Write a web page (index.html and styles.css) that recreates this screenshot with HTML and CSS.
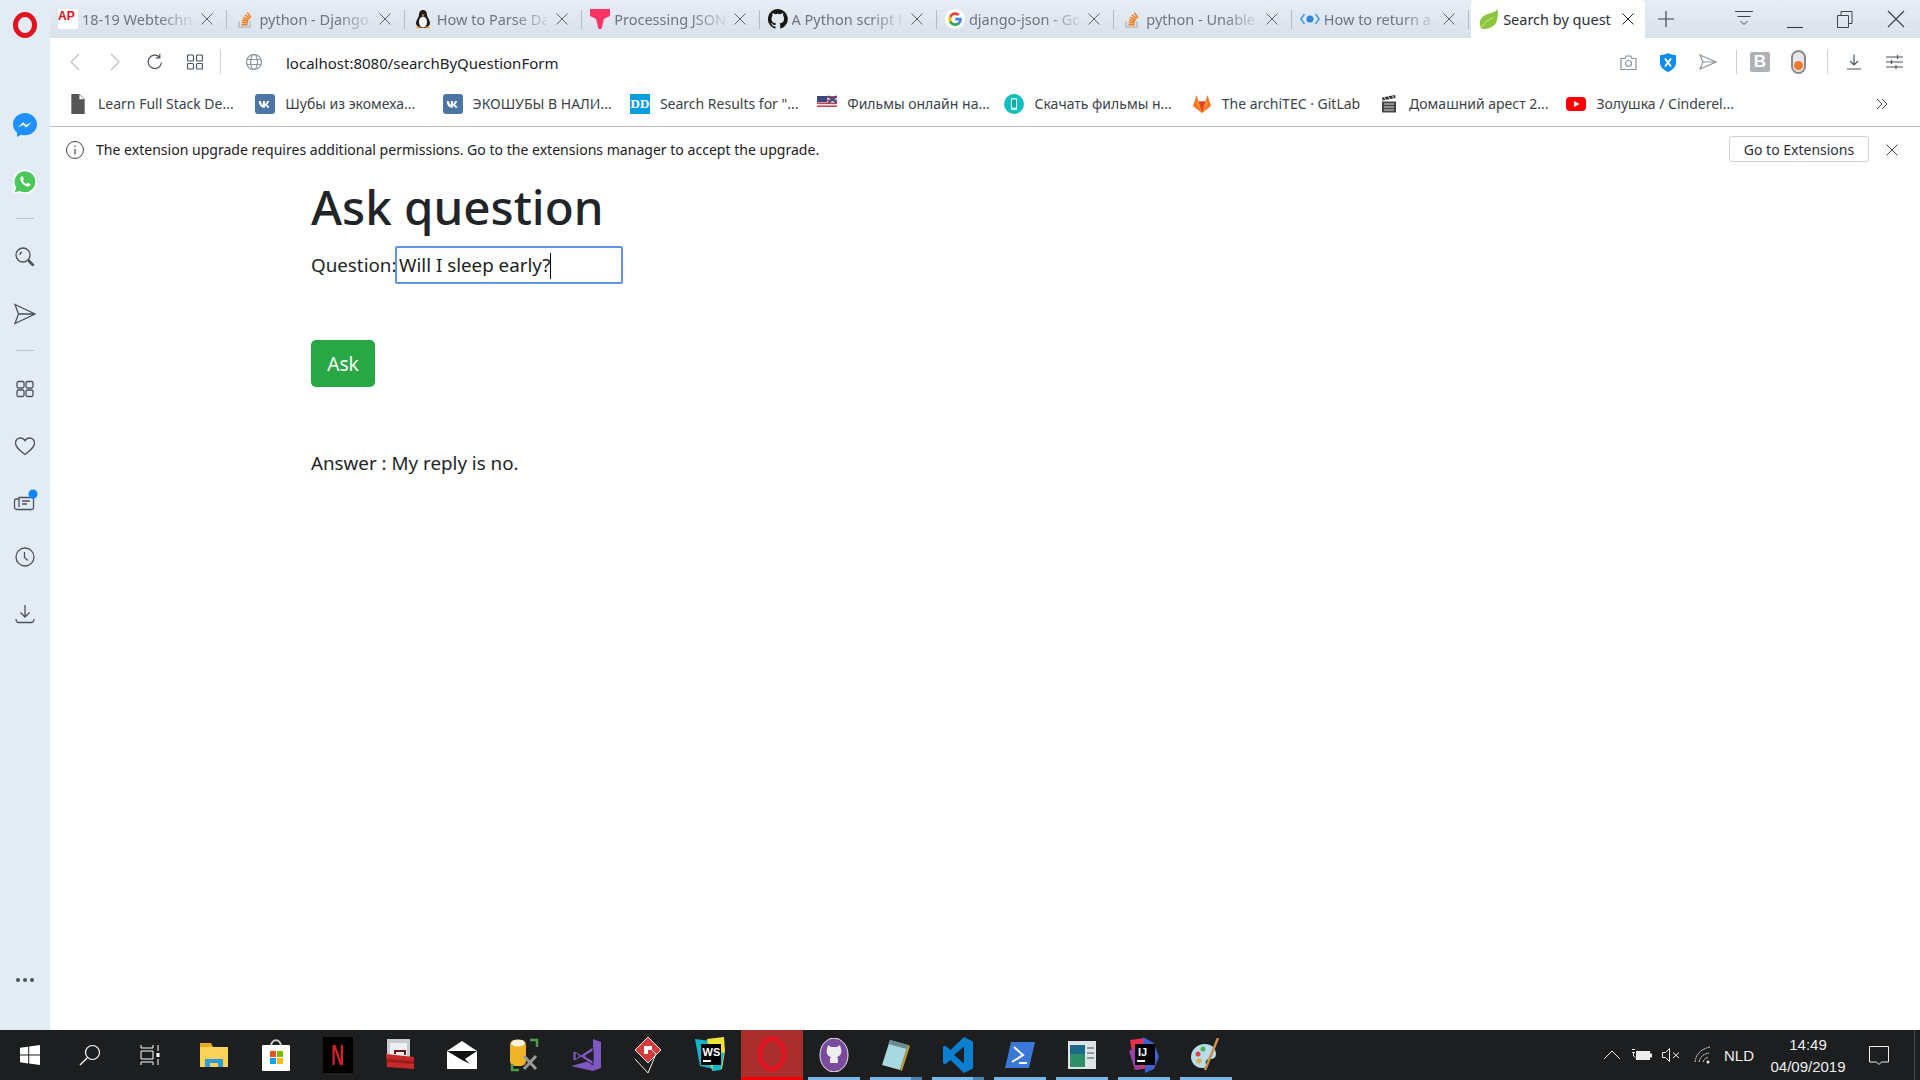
FILE: index.html
```html
<!DOCTYPE html>
<html lang="en">
<head>
    <meta charset="UTF-8">
    <meta name="viewport" content="width=device-width, initial-scale=1.0">
    <title>Search by question</title>
    <link rel="stylesheet" href="styles.css">
</head>
<body>
    <svg class="defs" width="0" height="0">
        <symbol id="so" viewBox="0 0 20 20">
            <path d="M4 12.5v5.5h11v-5.5" fill="none" stroke="#bcbbbb" stroke-width="1.6"/>
            <path d="M6.5 15.8h6.2M6.7 13.4l6.1.5M7.2 10.9l6 1.3M8.2 8.3l5.5 2.7M10 5.8l4.8 3.8M12.3 3.6l3.6 4.9" stroke="#f48024" stroke-width="1.6" fill="none"/>
        </symbol>
        <symbol id="x" viewBox="0 0 12 12">
            <path d="M0.5 0.5l11 11M11.5 0.5l-11 11" stroke="currentColor" stroke-width="1" fill="none"/>
        </symbol>
        <symbol id="vk" viewBox="0 0 20 20">
            <rect width="20" height="20" rx="3" fill="#4c75a3"/>
            <path d="M3.5 7h2.2c.5 2 1.3 3.5 2.2 3.9V7h2v2.9c.9-.2 1.8-1.4 2.2-2.9h2c-.3 1.700-1.400 3-2.300 3.600.9.500 2.100 1.500 2.700 3.200h-2.200c-.5-1.300-1.400-2.200-2.400-2.300v2.300h-.4c-3.500 0-5.500-2.400-5.800-6.800z" fill="#fff"/>
        </symbol>
    </svg>

    <div class="screen">
        <aside class="sidebar">
            <div class="side-logo">
                <svg width="24" height="26" viewBox="0 0 24 26"><ellipse cx="12" cy="13" rx="9.500" ry="10.500" fill="none" stroke="#e0141f" stroke-width="5"/></svg>
            </div>
            <div class="side-item">
                <svg width="26" height="26" viewBox="0 0 26 26"><path d="M13 1C6.400 1 1 6 1 12.200c0 3.400 1.500 6.400 4.100 8.400V25l4-2.300c1.200.4 2.500.6 3.900.6 6.600 0 12-5 12-11.100S19.600 1 13 1z" fill="#1e90ff"/><path d="M6 15.500l5.200-5.300 2.800 2.800 5.500-2.800-5.200 5.400-2.900-2.800z" fill="#fff"/></svg>
            </div>
            <div class="side-item">
                <svg width="26" height="26" viewBox="0 0 26 26"><path d="M13 1.500C6.700 1.500 1.800 6.500 1.800 12.700c0 2.100.6 4.100 1.600 5.800L1.500 24.500l6.100-1.800c1.600.9 3.400 1.300 5.400 1.300 6.200 0 11.200-5 11.200-11.300S19.200 1.500 13 1.500z" fill="#4cc75c" stroke="#fff" stroke-width="1.500"/><path d="M9.500 7.500c-.8.500-1.500 1.700-1 3.400.8 2.800 3.600 5.800 6.700 6.500 1.500.3 2.700-.4 3.100-1.300.2-.5.100-.9-.2-1.100l-2-1c-.3-.1-.6 0-.8.200l-.7.900c-1.700-.6-3-1.900-3.700-3.600l.8-.8c.2-.2.300-.5.100-.8l-.9-2.200c-.2-.5-.7-.6-1.400-.2z" fill="#fff"/></svg>
            </div>
            <div class="side-sep"></div>
            <div class="side-item">
                <svg class="line-icon" width="22" height="22" viewBox="0 0 22 22"><circle cx="9" cy="9" r="7"/><path d="M6 9a3.500 3.500 0 0 1 2-3.200M14 14l5.500 5.500" /><path d="M14.500 15.500l1-1 4 4-1 1z"/></svg>
            </div>
            <div class="side-item">
                <svg class="line-icon" width="24" height="22" viewBox="0 0 24 22"><path d="M2 1.500L22 11 2 20.500 5.500 11zM5.500 11H22"/></svg>
            </div>
            <div class="side-sep"></div>
            <div class="side-item">
                <svg class="line-icon" width="20" height="20" viewBox="0 0 20 20"><rect x="2" y="2.500" width="7" height="6.500" rx="1.500"/><rect x="11" y="2.500" width="7" height="6.500" rx="1.500"/><rect x="2" y="11" width="7" height="6.500" rx="1.500"/><rect x="11" y="11" width="7" height="6.500" rx="1.500"/></svg>
            </div>
            <div class="side-item">
                <svg class="line-icon" width="22" height="20" viewBox="0 0 22 20"><path d="M11 18.500C6 14.500 1.500 11.500 1.500 7A4.800 4.800 0 0 1 6.300 2C8.300 2 10 3 11 4.800 12 3 13.700 2 15.700 2A4.800 4.800 0 0 1 20.500 7c0 4.500-4.500 7.500-9.500 11.500z"/></svg>
            </div>
            <div class="side-item side-news">
                <svg class="line-icon" width="26" height="26" viewBox="0 0 26 26"><path d="M7 8.500h13a1.500 1.500 0 0 1 1.500 1.500v9a1.500 1.500 0 0 1-1.500 1.500H5A2.500 2.500 0 0 1 2.500 18v-6.500A2 2 0 0 1 4.500 10H7zM7 10v8"/><path d="M10 12h8M10 15h5"/><circle class="badge-dot" cx="21" cy="5" r="4.500"/></svg>
            </div>
            <div class="side-item side-clock">
                <svg class="line-icon" width="22" height="22" viewBox="0 0 22 22"><circle cx="11" cy="11" r="9"/><path d="M10.500 6v5.500l3.500 3"/></svg>
            </div>
            <div class="side-item">
                <svg class="line-icon" width="22" height="22" viewBox="0 0 22 22"><path d="M11 2v11.500M6.500 9.500l4.500 4.500 4.500-4.500M2 16c0 2 1 3.500 3 3.500h12c2 0 3-1.500 3-3.500"/></svg>
            </div>
            <div class="side-dots">
                <span></span><span></span><span></span>
            </div>
        </aside>

        <div class="browser">
            <div class="tabstrip">
                <div class="tab">
                    <svg class="favicon" viewBox="0 0 20 20"><rect width="20" height="20" fill="#fff"/><text x="0" y="11" class="fav-ap">AP</text></svg>
                    <span class="tab-title">18-19 Webtechn</span>
                    <svg class="tab-close"><use href="#x"/></svg>
                </div>
                <div class="tab">
                    <svg class="favicon"><use href="#so"/></svg>
                    <span class="tab-title">python - Django</span>
                    <svg class="tab-close"><use href="#x"/></svg>
                </div>
                <div class="tab">
                    <svg class="favicon" viewBox="0 0 20 20"><path d="M10 1c-3 0-4 2.500-4 5 0 2-3 5-3 8 0 3 3 5 7 5s7-2 7-5c0-3-3-6-3-8 0-2.500-1-5-4-5z" fill="#1d1d1d"/><ellipse cx="10" cy="13" rx="4" ry="5.500" fill="#f4f4f4"/><path d="M8.500 5.500h3l-1.500 2z" fill="#f0a020"/><path d="M3 19c1-2 3-2 4-1l-1 1.500zM17 19c-1-2-3-2-4-1l1 1.500z" fill="#f0a020"/></svg>
                    <span class="tab-title">How to Parse Da</span>
                    <svg class="tab-close"><use href="#x"/></svg>
                </div>
                <div class="tab">
                    <svg class="favicon" viewBox="0 0 20 20"><path d="M0 0h20v7l-6 3-2.500 10h-3L6 10 0 7z" fill="#ff3366"/></svg>
                    <span class="tab-title">Processing JSON</span>
                    <svg class="tab-close"><use href="#x"/></svg>
                </div>
                <div class="tab">
                    <svg class="favicon" viewBox="0 0 20 20"><path d="M10 0a10 10 0 0 0-3.200 19.500c.5.100.7-.2.700-.5v-1.700c-2.800.6-3.400-1.300-3.400-1.300-.4-1.200-1.100-1.500-1.100-1.500-.9-.6.100-.6.100-.6 1 .1 1.500 1 1.500 1 .9 1.500 2.300 1.100 2.900.8.100-.6.300-1.100.6-1.300-2.200-.3-4.600-1.100-4.600-4.900 0-1.100.4-2 1-2.700-.1-.2-.4-1.300.1-2.600 0 0 .8-.3 2.700 1a9.400 9.400 0 0 1 5 0c1.900-1.300 2.700-1 2.700-1 .5 1.300.2 2.400.1 2.600.6.700 1 1.600 1 2.700 0 3.800-2.300 4.600-4.600 4.900.4.300.7.900.7 1.900V19c0 .3.200.6.700.5A10 10 0 0 0 10 0z" fill="#161614"/></svg>
                    <span class="tab-title">A Python script f</span>
                    <svg class="tab-close"><use href="#x"/></svg>
                </div>
                <div class="tab">
                    <svg class="favicon" viewBox="0 0 20 20"><circle cx="10" cy="10" r="10" fill="#fff"/><path d="M16.800 10.200c0-.5 0-1-.1-1.400H10.200v2.700h3.700c-.2.900-.6 1.600-1.400 2.100v1.700h2.200c1.300-1.200 2.100-3 2.100-5.100z" fill="#4285f4"/><path d="M10.200 17c1.800 0 3.400-.6 4.500-1.700l-2.200-1.700c-.6.400-1.400.7-2.300.7-1.800 0-3.300-1.200-3.800-2.800H4.100v1.800A6.800 6.800 0 0 0 10.200 17z" fill="#34a853"/><path d="M6.400 11.500a4 4 0 0 1 0-2.700V7H4.100a6.800 6.800 0 0 0 0 6.300z" fill="#fbbc05"/><path d="M10.200 6c1 0 1.900.4 2.600 1l2-2a6.800 6.800 0 0 0-10.700 2l2.300 1.800C6.900 7.200 8.400 6 10.200 6z" fill="#ea4335"/></svg>
                    <span class="tab-title">django-json - Go</span>
                    <svg class="tab-close"><use href="#x"/></svg>
                </div>
                <div class="tab">
                    <svg class="favicon"><use href="#so"/></svg>
                    <span class="tab-title">python - Unable</span>
                    <svg class="tab-close"><use href="#x"/></svg>
                </div>
                <div class="tab">
                    <svg class="favicon" viewBox="0 0 20 20"><path d="M4.500 5L1 10l3.500 5M15.500 5L19 10l-3.500 5" fill="none" stroke="#4aa8e8" stroke-width="1.800"/><circle cx="10" cy="10" r="3.500" fill="#2b88d8"/></svg>
                    <span class="tab-title">How to return a</span>
                    <svg class="tab-close"><use href="#x"/></svg>
                </div>
                <div class="tab tab-active">
                    <svg class="favicon" viewBox="0 0 20 20"><path d="M18.500 0C17 3 13 3.500 9 5 3 7 0 11 1 16c.3 1.500 1 3 2 4 5 0 11-1 14-6 1.500-3 2.500-9 1.500-14z" fill="#8cc63f"/><path d="M3 18c3-5 7-8 11-9" stroke="#d8e87a" fill="none"/></svg>
                    <span class="tab-title">Search by quest</span>
                    <svg class="tab-close"><use href="#x"/></svg>
                </div>
                <div class="new-tab">
                    <svg width="16" height="16" viewBox="0 0 16 16"><path d="M8 0v16M0 8h16" stroke="#3d4650" stroke-width="1.200"/></svg>
                </div>
                <div class="win-buttons">
                    <svg width="20" height="20" viewBox="0 0 20 20"><path d="M1 2.500h18M3.500 7.500h13M6.500 12l3.500 3.500 3.500-3.500" stroke="#3d4650" fill="none"/></svg>
                    <svg width="20" height="20" viewBox="0 0 20 20"><path d="M2 18.500h16" stroke="#3d4650" stroke-width="1.200"/></svg>
                    <svg width="20" height="20" viewBox="0 0 20 20"><path d="M2.500 6.500h11v12h-11zM6 6.500V2.500h11v12h-3.500" stroke="#3d4650" fill="none"/></svg>
                    <svg width="20" height="20" viewBox="0 0 20 20"><path d="M2 2l16 16M18 2L2 18" stroke="#3d4650" stroke-width="1.200"/></svg>
                </div>
            </div>

            <div class="toolbar">
                <div class="tool-cell tool-first"><svg class="tool-icon tool-dim" width="12" height="18" viewBox="0 0 12 18"><path d="M10 1L2 9l8 8"/></svg></div>
                <div class="tool-cell"><svg class="tool-icon tool-dim" width="12" height="18" viewBox="0 0 12 18"><path d="M2 1l8 8-8 8"/></svg></div>
                <div class="tool-cell"><svg class="tool-icon" width="18" height="18" viewBox="0 0 18 18"><path d="M15.500 9.500A6.700 6.700 0 1 1 13.500 4M13.800 0.800v4h-4"/></svg></div>
                <div class="tool-cell"><svg class="tool-icon" width="16" height="16" viewBox="0 0 16 16"><rect x="0.500" y="1" width="6" height="6" rx="1"/><rect x="9.500" y="1" width="6" height="6" rx="1"/><rect x="0.500" y="9.500" width="6" height="5.500" rx="1"/><rect x="9.500" y="9.500" width="6" height="5.500" rx="1"/></svg></div>
                <div class="tool-sep"></div>
                <div class="tool-cell tool-globe"><svg class="tool-icon tool-grey" width="16" height="16" viewBox="0 0 16 16"><circle cx="8" cy="8" r="7.500"/><ellipse cx="8" cy="8" rx="3.500" ry="7.500"/><path d="M1 5.500h14M1 10.500h14"/></svg></div>
                <span class="url">localhost:8080/searchByQuestionForm</span>

                <div class="tool-cell tool-right"><svg class="tool-icon tool-grey" width="17" height="15" viewBox="0 0 17 15"><path d="M1 3.500h4l1-2.500h5l1 2.500h4v11H1z"/><circle cx="8.500" cy="8.500" r="3"/></svg></div>
                <div class="tool-cell"><svg width="16" height="19" viewBox="0 0 16 19"><path d="M8 0c2.500 1.500 5 2 8 2v8c0 4-3.500 7-8 9-4.500-2-8-5-8-9V2c3 0 5.500-.5 8-2z" fill="#0d8cf2"/><path d="M5 5.500l6 8M11 5.500l-6 8" stroke="#fff" stroke-width="2"/></svg></div>
                <div class="tool-cell"><svg class="tool-icon tool-grey" width="18" height="16" viewBox="0 0 18 16"><path d="M1 1l16 7-16 7 3-7zM4 8h13"/></svg></div>
                <div class="tool-sep tool-sep-right"></div>
                <div class="tool-cell"><div class="ext-b">B</div></div>
                <div class="tool-cell tool-toggle"><div class="ext-toggle"><span></span></div></div>
                <div class="tool-sep tool-sep-last"></div>
                <div class="tool-cell"><svg class="tool-icon" width="16" height="16" viewBox="0 0 16 16"><path d="M8 0.500v10M4 7l4 4 4-4M1 15h14"/></svg></div>
                <div class="tool-cell"><svg class="tool-icon" width="17" height="16" viewBox="0 0 17 16"><path d="M0 3h17M0 8h17M0 13h17M11.500 1v4M5.500 6v4M10 11v4"/></svg></div>
            </div>

            <div class="bookmarks">
                <div class="bookmark">
                    <svg class="bm-icon" viewBox="0 0 18 18"><path d="M3 0h7l5 5v13H3z" fill="#555"/><path d="M10 0v5h5z" fill="#fff" stroke="#555" stroke-width=".5"/></svg>
                    <span>Learn Full Stack De...</span>
                </div>
                <div class="bookmark">
                    <svg class="bm-icon"><use href="#vk"/></svg>
                    <span>Шубы из экомеха...</span>
                </div>
                <div class="bookmark">
                    <svg class="bm-icon"><use href="#vk"/></svg>
                    <span>ЭКОШУБЫ В НАЛИ...</span>
                </div>
                <div class="bookmark">
                    <div class="bm-dd">DD</div>
                    <span>Search Results for "...</span>
                </div>
                <div class="bookmark">
                    <svg class="bm-icon" viewBox="0 0 20 20"><rect y="2" width="20" height="11" fill="#c8434e"/><rect y="4" width="20" height="1.500" fill="#f0e8e8"/><rect y="7" width="20" height="1.500" fill="#f0e8e8"/><rect y="10" width="20" height="1.500" fill="#f0e8e8"/><rect y="2" width="10" height="6" fill="#3a4a80"/><path d="M11 2l9 7M20 2l-9 7" stroke="#34508a" stroke-width="2"/></svg>
                    <span>Фильмы онлайн на...</span>
                </div>
                <div class="bookmark">
                    <svg class="bm-icon" viewBox="0 0 20 20"><circle cx="10" cy="10" r="10" fill="#10c0c0"/><rect x="7" y="4" width="6" height="12" rx="1" fill="#d8f6f6"/><rect x="8" y="5.500" width="4" height="8" fill="#10a8a8"/></svg>
                    <span>Скачать фильмы н...</span>
                </div>
                <div class="bookmark">
                    <svg class="bm-icon" viewBox="0 0 20 20"><path d="M10 19L1 12l1.500-4.500L4.500 1l2 6.500h7l2-6.500 2 6.500L19 12z" fill="#fc6d26"/><path d="M10 19L6.500 7.500h7z" fill="#e24329"/><path d="M10 19L2.500 7.500H6.500zM10 19l7.500-11.500H13.500z" fill="#fca326" opacity=".7"/></svg>
                    <span>The archiTEC · GitLab</span>
                </div>
                <div class="bookmark">
                    <svg class="bm-icon" viewBox="0 0 20 20"><path d="M3 7.500h14v11H3z" fill="#444"/><path d="M3 3.500l13-2.500.6 3-13 2.500z" fill="#333"/><path d="M5 3l2 3M9 2.200l2 3M13 1.500l2 3M5 10h10M5 13h10M5 16h10" stroke="#ddd"/></svg>
                    <span>Домашний арест 2...</span>
                </div>
                <div class="bookmark">
                    <svg class="bm-icon" viewBox="0 0 20 20"><rect y="3" width="20" height="14" rx="4" fill="#f00"/><path d="M8 7l5.500 3L8 13z" fill="#fff"/></svg>
                    <span>Золушка / Cinderel...</span>
                </div>
                <svg class="bm-more" width="12" height="12" viewBox="0 0 12 12"><path d="M1 1l5 5-5 5M6 1l5 5-5 5" stroke="#444" fill="none"/></svg>
            </div>

            <div class="infobar">
                <svg class="info-icon" width="18" height="18" viewBox="0 0 18 18"><circle cx="9" cy="9" r="8.500" fill="none" stroke="#444"/><path d="M9 8v5.500M9 4.500v1.500" stroke="#444" stroke-width="1.200"/></svg>
                <span class="info-text">The extension upgrade requires additional permissions. Go to the extensions manager to accept the upgrade.</span>
                <button class="info-btn">Go to Extensions</button>
                <svg class="info-close"><use href="#x"/></svg>
            </div>

            <main class="page">
                <h1>Ask question</h1>
                <div class="form-row">
                    <label class="form-label">Question:</label>
                    <div class="field">Will I sleep early?<span class="caret"></span></div>
                </div>
                <button class="btn-ask">Ask</button>
                <p class="answer">Answer : My reply is no.</p>
            </main>
        </div>

        <footer class="taskbar">
            <div class="task-sys">
                <svg width="20" height="20" viewBox="0 0 20 20"><path d="M0 2.800l8.200-1.100v7.900H0zM9.200 1.500L20 0v9.600H9.200zM0 10.500h8.200v7.900L0 17.200zM9.200 10.500H20V20L9.200 18.500z" fill="#fff"/></svg>
            </div>
            <div class="task-sys">
                <svg width="22" height="22" viewBox="0 0 22 22"><circle cx="13.500" cy="8.500" r="7" fill="none" stroke="#fff" stroke-width="1.200"/><path d="M8.500 13.500L1 21" stroke="#fff" stroke-width="1.200"/></svg>
            </div>
            <div class="task-sys task-sys-last">
                <svg width="20" height="22" viewBox="0 0 20 22"><path d="M1 1v3h12V1M1 21v-3h12v3M1 7h12v8H1zM18 1v6M18 15v6" fill="none" stroke="#fff"/><rect x="16.500" y="9" width="3" height="4" fill="#fff"/></svg>
            </div>
            <div class="task-cell">
                <svg width="28" height="26" viewBox="0 0 28 26"><path d="M0 1h11l2 4h15v20H0z" fill="#e8a820"/><rect y="5" width="28" height="20" fill="#fbd25a"/><path d="M5 25v-8h18v8h-5v-4h-8v4z" fill="#2d9cdb"/></svg>
            </div>
            <div class="task-cell">
                <svg width="28" height="32" viewBox="0 0 28 32"><path d="M9 8c0-9 10-9 10 0" stroke="#ccc" stroke-width="2" fill="none"/><rect y="6" width="28" height="26" rx="1" fill="#fff"/><rect x="8" y="12" width="6" height="6" fill="#f25022"/><rect x="15" y="12" width="6" height="6" fill="#7fba00"/><rect x="8" y="19" width="6" height="6" fill="#00a4ef"/><rect x="15" y="19" width="6" height="6" fill="#ffb900"/></svg>
            </div>
            <div class="task-cell">
                <div class="app-netflix"><span>N</span></div>
            </div>
            <div class="task-cell">
                <svg width="28" height="32" viewBox="0 0 28 32"><rect x="1" y="0" width="23" height="20" fill="#c8ccd0"/><rect x="4" y="4" width="17" height="14" fill="#eef0f2"/><path d="M0 15l28 3v12l-27-2z" fill="#c82a2a"/><path d="M0 20l28 2v3l-28-2z" fill="#962020"/><path d="M9 15v-3h10v4" stroke="#701818" stroke-width="2" fill="none"/></svg>
            </div>
            <div class="task-cell">
                <svg width="30" height="28" viewBox="0 0 30 28"><path d="M0 10L15 0l15 10v18H0z" fill="#fff"/><path d="M0 10h30L18 18l5 5-8-4z" fill="#111"/></svg>
            </div>
            <div class="task-cell">
                <svg width="30" height="34" viewBox="0 0 30 34"><rect x="1" y="2" width="16" height="26" rx="5" fill="#f0b429"/><ellipse cx="9" cy="5" rx="7" ry="3.500" fill="#f8f0d8"/><path d="M21 2h7v7M3 26v6h7" stroke="#4e9a4e" stroke-width="2.500" fill="none"/><path d="M15 31l12-13M27 31L15 18" stroke="#999" stroke-width="3"/></svg>
            </div>
            <div class="task-cell">
                <svg width="30" height="32" viewBox="0 0 30 32"><path d="M22 0l8 3v26l-8 3L0 27l22-6V0z" fill="#7e57c2"/><path d="M22 8L10 16l-6-4-2 1v8l2 1 6-4 12 8zM5 14.500l3 2.500-3 2.500zM22 12v10l-8-5z" fill="#7e57c2" stroke="#1c1e1f" stroke-width=".8"/></svg>
            </div>
            <div class="task-cell">
                <svg width="26" height="36" viewBox="0 0 26 36"><path d="M13 0l13 13-13 13L0 13z" fill="#d63b3b" stroke="#eee"/><path d="M13 9l8 8-8 19L0 22" fill="none" stroke="#eee"/><path d="M9 9h8v4h-4v4H9z" fill="#fff"/></svg>
            </div>
            <div class="task-cell">
                <svg width="30" height="36" viewBox="0 0 30 36"><path d="M0 2l16 2 3 28-14-3z" fill="#12b5cb"/><path d="M12 2l17-2 1 14-3 18-10 2z" fill="#f2e33a"/><path d="M20 14l9 2-3 17-9 1z" fill="#12b5cb"/><rect x="6" y="7" width="20" height="21" fill="#000"/><text x="7.500" y="19" class="app-text">WS</text><rect x="8" y="23" width="8" height="2" fill="#fff"/></svg>
            </div>
            <div class="task-cell task-active">
                <svg width="30" height="36" viewBox="0 0 30 36"><ellipse cx="15" cy="18" rx="12" ry="15" fill="none" stroke="#e01520" stroke-width="5"/></svg>
            </div>
            <div class="task-cell task-run">
                <svg width="30" height="34" viewBox="0 0 30 34"><ellipse cx="15" cy="17" rx="14" ry="17" fill="#7a4a9c" stroke="#eee"/><path d="M8 11l1-4 3 2h6l3-2 1 4c1 3 0 7-4 8 1 1 1 2 1 6h-8c0-4 0-5 1-6-4-1-5-5-4-8z" fill="#eee"/></svg>
            </div>
            <div class="task-cell task-run task-group">
                <svg width="28" height="32" viewBox="0 0 28 32"><path d="M8 1l18 5-8 25-18-5z" fill="#a8d8e0"/><path d="M8 1l18 5-1.500 4L6.500 5z" fill="#6a8a90"/><path d="M26 6l2 1-8 25-2-1z" fill="#c09a3a"/></svg>
            </div>
            <div class="task-cell task-run task-group">
                <svg width="30" height="36" viewBox="0 0 30 36"><path d="M21 0l9 4.500v27L21 36 7.500 23 2 27.500 0 26V10l2-1.500L7.500 13zM21 9.500L11 18l10 8.500z" fill="#0a7fd0"/></svg>
            </div>
            <div class="task-cell task-run">
                <svg width="30" height="26" viewBox="0 0 30 26"><path d="M6 0h24l-6 26H0z" fill="#3a78d8"/><path d="M9 5l9 8-11 7" stroke="#fff" stroke-width="2" fill="none"/><path d="M14 21h8" stroke="#fff" stroke-width="2"/></svg>
            </div>
            <div class="task-cell task-run">
                <svg width="28" height="28" viewBox="0 0 28 28"><rect width="28" height="28" fill="#dfe3e6"/><rect x="2" y="4" width="15" height="22" fill="#2f8f6a"/><rect x="2" y="4" width="15" height="9" fill="#1e6a8a"/><path d="M19 7h7M19 12h7M19 17h7" stroke="#8a9aa0" stroke-width="2"/></svg>
            </div>
            <div class="task-cell task-run">
                <svg width="30" height="36" viewBox="0 0 30 36"><path d="M1 3l15-2 4 30-14 2z" fill="#e8304f"/><path d="M14 0l11 6 5 14-5 12-9 4z" fill="#3d5fd0"/><path d="M0 14l8-4 4 22-6 1z" fill="#9b3fa8"/><rect x="6" y="7" width="20" height="21" fill="#000"/><text x="9" y="19" class="app-text">IJ</text><rect x="8" y="23" width="8" height="2" fill="#fff"/></svg>
            </div>
            <div class="task-cell task-run">
                <svg width="30" height="34" viewBox="0 0 30 34"><path d="M14 6C6 6 0 12 0 19c0 6 5 11 11 11 4 0 5-2 4-4-1-3 1-5 4-5 4 0 6-2 6-5 0-6-5-10-11-10z" fill="#b8dcec"/><circle cx="7" cy="16" r="2.500" fill="#e04040"/><circle cx="12" cy="11" r="2.500" fill="#50b050"/><circle cx="8" cy="23" r="2.500" fill="#e8b030"/><path d="M27 0l-13 32" stroke="#c8924a" stroke-width="2.500"/></svg>
            </div>

            <div class="tray">
                <div class="tray-item tray-chevron">
                    <svg width="18" height="10" viewBox="0 0 18 10"><path d="M1 9l8-8 8 8" stroke="#eee" fill="none"/></svg>
                </div>
                <div class="tray-item tray-battery">
                    <svg width="20" height="14" viewBox="0 0 20 14"><path d="M0 1.500h3M0 4.500h3" stroke="#eee"/><path d="M1.500 5v3l2 1.500" stroke="#eee" fill="none"/><rect x="4" y="3" width="14" height="9" fill="#eee"/><rect x="18" y="5.500" width="2" height="4" fill="#eee"/></svg>
                </div>
                <div class="tray-item tray-speaker">
                    <svg width="18" height="14" viewBox="0 0 18 14"><path d="M0.500 4.500h3l4-4v13l-4-4h-3z" fill="none" stroke="#eee"/><path d="M11 4.500l6 5.500M17 4.500L11 10" stroke="#eee"/></svg>
                </div>
                <div class="tray-item tray-wifi">
                    <svg width="18" height="18" viewBox="0 0 18 18"><path d="M1 16C2 8 7 3 16 1M5 16c1-5 4-8 10-9M9 16c.5-2 2-4 5-4.500" stroke="#ccc" fill="none" stroke-dasharray="2 .6"/><circle cx="14" cy="16" r="1.500" fill="#eee"/></svg>
                </div>
                <div class="tray-item tray-lang">NLD</div>
                <div class="tray-item tray-clock">
                    <span>14:49</span>
                    <span>04/09/2019</span>
                </div>
                <div class="tray-item tray-notify">
                    <svg width="20" height="20" viewBox="0 0 20 20"><path d="M0.500 1.500h19v15.500h-7l-2.500 2.500-2.500-2.500h-7z" fill="none" stroke="#eee"/></svg>
                </div>
                <div class="tray-line"></div>
            </div>
        </footer>
    </div>
</body>
</html>
```

FILE: styles.css
```css
* {
    box-sizing: border-box;
}
html, body {
    margin: 0;
    height: 100%;
    overflow: hidden;
}
body {
    font-family: "Noto Sans", "Open Sans", sans-serif;
    background: #ffffff;
}
.defs {
    display: block;
    height: 0;
}
.screen {
    width: 1920px;
    height: 1080px;
    display: grid;
    grid-template-columns: 50px 1870px;
    grid-template-rows: 1030px 50px;
}

/* opera sidebar */
.sidebar {
    background: #e3ebf4;
    display: flex;
    flex-direction: column;
    align-items: center;
}
.side-logo {
    height: 96px;
    padding-top: 12px;
}
.side-item {
    height: 57px;
    width: 100%;
    display: flex;
    align-items: center;
    justify-content: center;
    flex-shrink: 0;
}
.side-news {
    height: 55px;
}
.side-clock {
    height: 56px;
}
.side-sep {
    width: 18px;
    height: 1px;
    margin: 8px 0 9px;
    background: #b9c5d2;
    flex-shrink: 0;
}
.line-icon {
    fill: none;
    stroke: #4a525b;
    stroke-width: 1.3;
}
.badge-dot {
    fill: #0a84ff;
    stroke: none;
}
.side-dots {
    margin-top: auto;
    margin-bottom: 48px;
    display: flex;
    gap: 3px;
}
.side-dots span {
    width: 4px;
    height: 4px;
    border-radius: 50%;
    background: #4a525b;
}

/* browser window */
.browser {
    display: flex;
    flex-direction: column;
    min-width: 0;
}
.tabstrip {
    height: 38px;
    display: flex;
    align-items: stretch;
    background: linear-gradient(to bottom, #e6edf5, #d9e1ea);
    font-size: 14.5px;
}
.tab {
    flex: 0 0 177.4px;
    min-width: 0;
    display: flex;
    align-items: center;
    padding-left: 8px;
    color: #6d7680;
}
.tab::after {
    content: "";
    width: 1px;
    height: 19px;
    background: #b3bcc6;
    flex-shrink: 0;
}
.favicon {
    width: 20px;
    height: 20px;
    margin-right: 4px;
    flex-shrink: 0;
}
.fav-ap {
    font-family: "Liberation Sans", sans-serif;
    font-size: 12px;
    font-weight: 700;
    fill: #e01020;
}
.tab-title {
    flex: 1;
    white-space: nowrap;
    min-width: 0;
    -webkit-mask-image: linear-gradient(to right, #000 70%, rgba(0, 0, 0, 0.15) 100%);
    mask-image: linear-gradient(to right, #000 70%, rgba(0, 0, 0, 0.15) 100%);
}
.tab-close {
    width: 12px;
    height: 12px;
    margin: 0 13px 0 9px;
    flex-shrink: 0;
    color: #5b636c;
}
.tab-active {
    flex-basis: 174px;
    margin-left: 2px;
    background: #ffffff;
    border-radius: 4px 4px 0 0;
    color: #2a3036;
}
.tab-active::after {
    display: none;
}
.tab-active .tab-title {
    -webkit-mask-image: none;
    mask-image: none;
}
.tab-active .tab-close {
    color: #222;
    margin-right: 11px;
}
.new-tab {
    margin-left: 13px;
    display: flex;
    align-items: center;
}
.win-buttons {
    margin-left: 60px;
    display: flex;
    align-items: center;
    gap: 30.500px;
}
.toolbar {
    height: 48px;
    display: flex;
    align-items: center;
    background: #ffffff;
}
.tool-cell {
    width: 40px;
    height: 32px;
    display: flex;
    align-items: center;
    justify-content: center;
    flex-shrink: 0;
}
.tool-first {
    margin-left: 5px;
}
.tool-icon {
    fill: none;
    stroke: #4b535c;
    stroke-width: 1.2;
}
.tool-dim {
    stroke: #b9bfc6;
}
.tool-grey {
    stroke: #8e959c;
}
.tool-sep {
    width: 1px;
    height: 24px;
    background: #ccd2d9;
    margin-left: 5px;
    flex-shrink: 0;
}
.tool-globe {
    margin-left: 13px;
}
.url {
    margin: 2px 0 0 12px;
    font-size: 15px;
    color: #1e2328;
    white-space: nowrap;
}
.tool-right {
    margin-left: auto;
}
.tool-sep-right {
    margin-left: 8px;
    margin-right: 3px;
}
.tool-toggle {
    margin-left: -2px;
}
.tool-sep-last {
    margin: 0 6px 0 9px;
}
.toolbar > .tool-cell:last-child {
    margin-right: 6px;
}
.ext-b {
    width: 20px;
    height: 20px;
    background: #aeb2b6;
    color: #ffffff;
    font-family: "Liberation Sans", sans-serif;
    font-size: 17px;
    font-weight: 700;
    line-height: 20px;
    text-align: center;
    border-radius: 2px;
}
.ext-toggle {
    width: 15px;
    height: 24px;
    border-radius: 8px;
    background: #e6e6e6;
    border: 2px solid #8a8a8a;
    display: flex;
    align-items: flex-end;
    justify-content: center;
    padding-bottom: 2px;
}
.ext-toggle span {
    width: 9px;
    height: 9px;
    border-radius: 50%;
    background: #f07a2a;
}
.bookmarks {
    height: 41px;
    padding: 0 32px 5px 18px;
    display: flex;
    align-items: center;
    font-size: 14px;
    color: #3c434a;
    background: #ffffff;
    border-bottom: 1px solid #b9c2cd;
}
.bookmark {
    flex: 0 0 187.3px;
    min-width: 0;
    display: flex;
    align-items: center;
    white-space: nowrap;
}
.bm-icon {
    width: 20px;
    height: 20px;
    margin-right: 10px;
    flex-shrink: 0;
}
.bm-dd {
    width: 20px;
    height: 20px;
    margin-right: 10px;
    background: #0a9be0;
    color: #ffffff;
    font-family: "Liberation Serif", serif;
    font-size: 13px;
    font-weight: 700;
    line-height: 20px;
    text-align: center;
    flex-shrink: 0;
}
.bm-more {
    margin-left: auto;
}
.infobar {
    height: 42px;
    padding: 3px 22px 0 16px;
    display: flex;
    align-items: center;
    font-size: 14.050px;
    color: #1d2125;
    background: #ffffff;
}
.info-icon {
    flex-shrink: 0;
}
.info-text {
    margin-left: 12px;
    white-space: nowrap;
}
.info-btn {
    margin-left: auto;
    margin-bottom: 1px;
    width: 140px;
    height: 26px;
    padding: 0;
    background: #ffffff;
    border: 1px solid #ccd1d7;
    border-radius: 3px;
    font-family: inherit;
    font-size: 14px;
    color: #2c3237;
}
.info-close {
    width: 12px;
    height: 12px;
    margin-left: 17px;
    color: #3c434a;
}

/* the page itself */
.page {
    flex: 1;
    padding: 9px 0 0 261px;
    font-size: 18.8px;
    line-height: 29px;
    color: #212529;
}
h1 {
    margin: 0 0 10px;
    font-size: 47.5px;
    font-weight: 500;
    line-height: 58px;
}
.form-row {
    display: flex;
    align-items: center;
}
.form-label {
    width: 84px;
    padding-top: 1px;
    white-space: nowrap;
}
.field {
    width: 228px;
    height: 38px;
    padding: 1px 2px 0;
    display: flex;
    align-items: center;
    white-space: pre;
    color: #1a1d20;
    border: 2px solid #5f94ea;
    border-radius: 2px;
}
.caret {
    width: 1px;
    height: 26px;
    background: #000;
}
.btn-ask {
    display: block;
    margin-top: 56px;
    width: 64px;
    height: 47px;
    padding: 0;
    background: #28a745;
    color: #ffffff;
    border: none;
    border-radius: 5px;
    font-family: inherit;
    font-size: 19.2px;
}
.answer {
    margin: 62px 0 0;
}

/* windows taskbar */
.taskbar {
    grid-column: 1 / 3;
    display: flex;
    align-items: stretch;
    background: #1c1e1f;
}
.task-sys {
    width: 60px;
    display: flex;
    align-items: center;
    justify-content: center;
}
.task-sys-last {
    margin-right: 3px;
}
.task-cell {
    width: 62px;
    position: relative;
    display: flex;
    align-items: center;
    justify-content: center;
}
.task-active {
    background: #a92f2f;
    border-bottom: 3px solid #f00000;
}
.task-run::after {
    content: "";
    position: absolute;
    left: 5px;
    right: 5px;
    bottom: 0;
    height: 3px;
    background: #76b9ed;
}
.task-group::before {
    content: "";
    position: absolute;
    right: 5px;
    bottom: 0;
    width: 11px;
    height: 3px;
    background: #4c82ad;
    z-index: 1;
}
.app-netflix {
    width: 30px;
    height: 36px;
    background: #000;
    color: #d81f26;
    font-family: "Liberation Sans", sans-serif;
    font-size: 30px;
    font-weight: 700;
    line-height: 36px;
    text-align: center;
}
.app-netflix span {
    display: inline-block;
    transform: scaleX(0.6);
}
.app-text {
    font-family: "Liberation Sans", sans-serif;
    font-size: 11px;
    font-weight: 700;
    fill: #ffffff;
}
.tray {
    margin-left: auto;
    display: flex;
    align-items: stretch;
    font-family: "Liberation Sans", sans-serif;
    color: #eeeeee;
}
.tray-item {
    display: flex;
    align-items: center;
    justify-content: center;
}
.tray-chevron {
    width: 30px;
}
.tray-battery {
    width: 30px;
}
.tray-speaker {
    width: 27px;
}
.tray-wifi {
    width: 38px;
}
.tray-lang {
    width: 34px;
    font-size: 15px;
}
.tray-clock {
    width: 104px;
    flex-direction: column;
    font-size: 15px;
    gap: 5px;
}
.tray-notify {
    width: 38px;
}
.tray-line {
    width: 1px;
    margin: 0 5px 0 16px;
    background: #4a4c4e;
}
```
